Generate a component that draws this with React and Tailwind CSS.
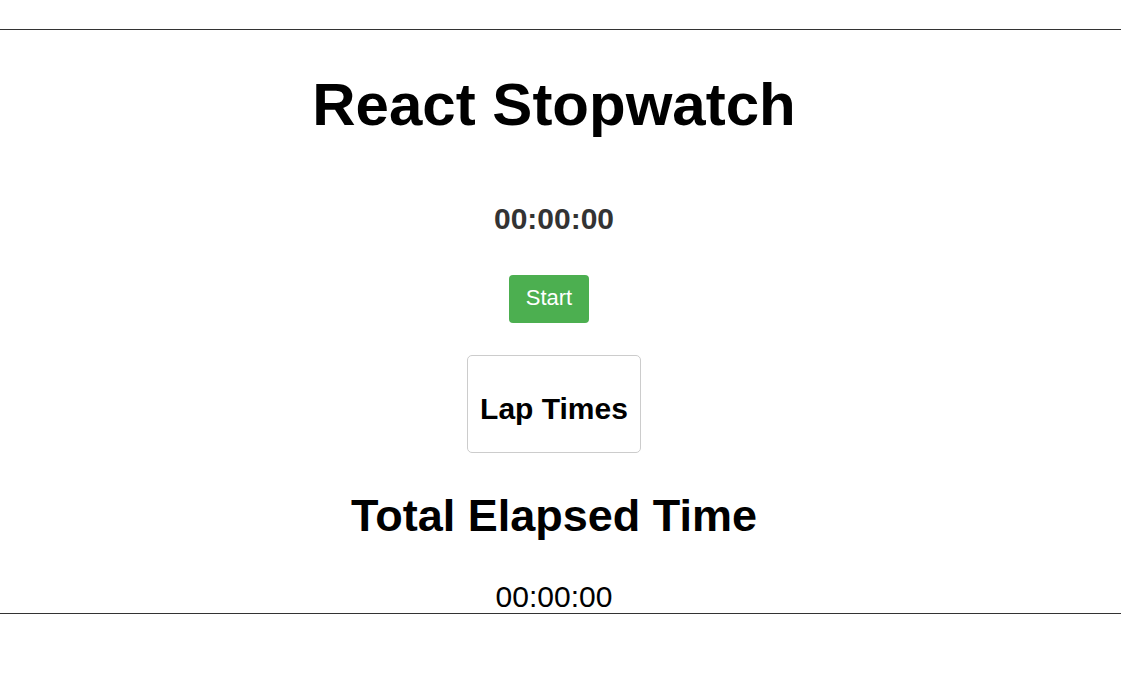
import React, { useState } from "react";

const App = () => {
  const [laps] = useState([]);
  return (
    <div className="min-h-screen bg-white pt-[29px] font-['Liberation_Sans',Arial,sans-serif] text-black">
      <div className="border-t border-b border-[#333] pr-[13px] flex flex-col items-center">
        <h1 className="mt-[40px] text-[60px] leading-[69px] font-bold">React Stopwatch</h1>
        <div className="mt-[63px] text-[30px] leading-[34px] font-bold text-[#333]">00:00:00</div>
        <div className="mt-[39px] flex">
          <button className="mr-[10px] w-[80px] h-[48px] pt-[10px] pb-[12px] bg-[#4CAF50] text-white text-[22px] leading-[26px] rounded-[4px]">
            Start
          </button>
        </div>
        <div className="mt-[32px] w-[174px] h-[98px] border border-[#ccc] rounded-[5px] pt-[36px] flex flex-col items-center">
          <h2 className="text-[30px] leading-[34px] font-bold">Lap Times</h2>
          <ul>
            {laps.map((l, i) => (
              <li key={i}>{l}</li>
            ))}
          </ul>
        </div>
        <h2 className="mt-[38px] text-[45px] leading-[50px] font-bold">Total Elapsed Time</h2>
        <div className="mt-[39px] text-[30px] leading-[33px]">00:00:00</div>
      </div>
    </div>
  );
};

export default App;
